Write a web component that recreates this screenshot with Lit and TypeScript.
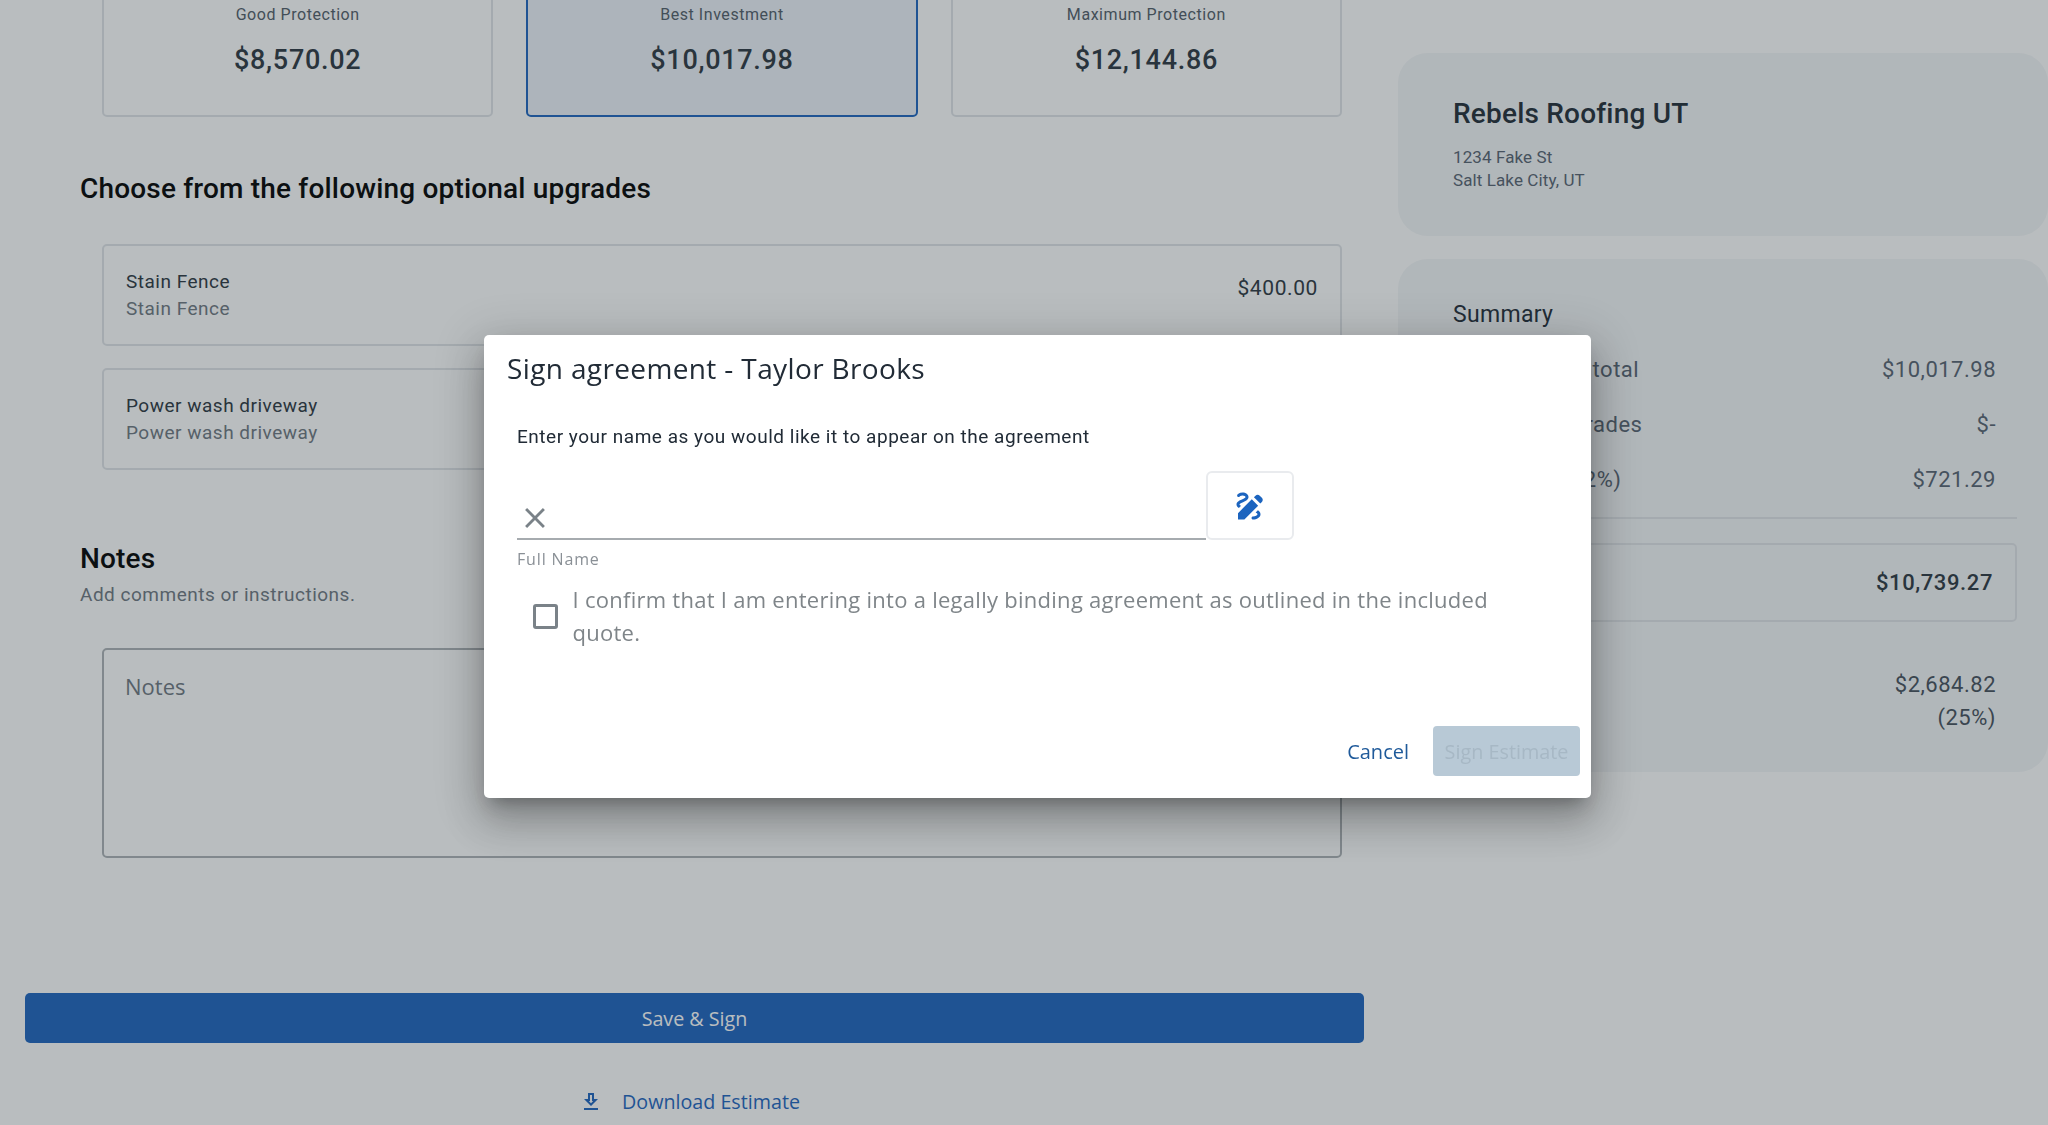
import { LitElement, html, css, svg } from 'lit';
import { customElement } from 'lit/decorators.js';

const plans = [
    { label: 'Good Protection', price: '$8,570.02', selected: false },
    { label: 'Best Investment', price: '$10,017.98', selected: true },
    { label: 'Maximum Protection', price: '$12,144.86', selected: false },
];

const upgrades = [
    { name: 'Stain Fence', price: '$400.00' },
    { name: 'Power wash driveway', price: '$250.00' },
];

const summary = [
    { label: 'Selected Tier total', value: '$10,017.98' },
    { label: 'Optional Upgrades', value: '$-' },
    { label: 'Sales Tax (7.2%)', value: '$721.29' },
];

const icon = (size: number, d: ReturnType<typeof svg>) => html`
    <svg width=${size} height=${size} viewBox="0 0 24 24" fill="currentColor">${d}</svg>
`;

const drawIcon = svg`<path d="M18.85 10.39l1.06-1.06c.78-.78.78-2.05 0-2.83L18.5 5.09c-.78-.78-2.05-.78-2.83 0l-1.06 1.06 4.24 4.24zm-5.66-2.83L4 16.76V21h4.24l9.19-9.19-4.24-4.25zM19 17.5c0 2.19-2.54 3.5-5 3.5-.55 0-1-.45-1-1s.45-1 1-1c1.54 0 3-.73 3-1.5 0-.47-.48-.87-1.23-1.2l1.48-1.48c1.07.63 1.75 1.47 1.75 2.68zM4.58 13.35C3.61 12.79 3 12.06 3 11c0-1.8 1.89-2.63 3.56-3.36C7.59 7.18 9 6.56 9 6c0-.41-.78-1-2-1-1.26 0-1.8.61-1.83.64-.35.41-.98.46-1.4.12-.41-.34-.49-.95-.15-1.38C3.73 4.24 4.76 3 7 3s4 1.32 4 3c0 1.87-1.93 2.72-3.64 3.47C6.42 9.88 5 10.5 5 11c0 .31.43.6 1.07.86l-1.49 1.49z"/>`;
const closeIcon = svg`<path d="M19 6.41L17.59 5 12 10.59 6.41 5 5 6.41 10.59 12 5 17.59 6.41 19 12 13.41 17.59 19 19 17.59 13.41 12z"/>`;
const downloadIcon = svg`<path d="M19 9h-4V3H9v6H5l7 7 7-7zm-8 2V5h2v6h1.17L12 13.17 9.83 11H11zm-6 7h14v2H5z"/>`;

@customElement('app-root')
export class AppRoot extends LitElement {
    static styles = css`
        :host {
            display: block;
            height: 1125px;
            overflow: hidden;
            background: #fff;
            font-family: Roboto, sans-serif;
            color: #212b36;
        }
        .page {
            display: grid;
            grid-template-columns: 1398px 650px;
            margin-top: -40px;
        }
        .main {
            padding-left: 25px;
            width: 1339px;
        }
        .plans {
            display: grid;
            grid-template-columns: repeat(3, 1fr);
            gap: 33px;
            width: 1240px;
            margin-left: 77px;
        }
        .plan {
            box-sizing: border-box;
            height: 157px;
            border: 2px solid #e1e4e8;
            border-radius: 5px;
            text-align: center;
            padding-top: 41px;
        }
        .plan.selected {
            background: #eef2f9;
            border-color: #1c64bf;
        }
        .plan-label {
            font-size: 16px;
            line-height: 24px;
            letter-spacing: 0.55px;
            color: #515c68;
        }
        .plan-price {
            margin-top: 15px;
            font-size: 27px;
            line-height: 36px;
            font-weight: 500;
            letter-spacing: 0.7px;
            color: #2c3640;
        }
        h2 {
            margin: 0;
            color: #000;
            font-size: 28px;
            font-weight: 500;
            line-height: 36px;
            letter-spacing: 0.18px;
        }
        .upgrades-title {
            margin: 54px 0 37px 55px;
        }
        .upgrade {
            box-sizing: border-box;
            height: 102px;
            margin: 0 0 22px 77px;
            width: 1240px;
            border: 2px solid #e1e4e8;
            border-radius: 5px;
            padding: 22px 22px 0;
            display: flex;
            justify-content: space-between;
            font-size: 19px;
            line-height: 27px;
            letter-spacing: 0.5px;
            color: #2c3640;
        }
        .upgrade-sub {
            color: #6e7780;
        }
        .upgrade-price {
            font-size: 21px;
            line-height: 40px;
            letter-spacing: 0.6px;
        }
        .notes-title {
            margin: 71px 0 0 55px;
        }
        .notes-sub {
            margin: 4px 0 0 55px;
            font-size: 19px;
            line-height: 28px;
            letter-spacing: 0.5px;
            color: #6e7780;
        }
        textarea {
            display: block;
            box-sizing: border-box;
            width: 1240px;
            height: 210px;
            margin: 39px 0 0 77px;
            border: 2px solid #adb2b6;
            border-radius: 5px;
            padding: 21px 21px;
            resize: none;
            font-family: 'Open Sans', sans-serif;
            font-size: 22px;
            background: transparent;
        }
        textarea::placeholder {
            color: #6e7780;
        }
        .save {
            display: block;
            width: 100%;
            height: 50px;
            margin-top: 135px;
            border: 0;
            border-radius: 5px;
            background: #1c64bf;
            color: #fff;
            font-family: 'Open Sans', sans-serif;
            font-size: 19.7px;
        }
        .download {
            margin-top: 41px;
            padding-right: 10px;
            display: flex;
            justify-content: center;
            align-items: center;
            gap: 19px;
            color: #1c64bf;
            font-family: 'Open Sans', sans-serif;
            font-size: 19.7px;
            line-height: 36px;
        }
        .side {
            padding-top: 93px;
        }
        .panel {
            background: #f4f6f8;
            border-radius: 30px;
            box-sizing: border-box;
            padding-left: 55px;
        }
        .company {
            height: 183px;
            padding-top: 43px;
            margin-bottom: 23px;
        }
        .company-name {
            font-size: 28px;
            font-weight: 500;
            line-height: 36px;
            letter-spacing: 0.2px;
        }
        .company-address {
            margin-top: 14px;
            font-size: 17px;
            line-height: 23px;
            letter-spacing: 0.1px;
            color: #566270;
        }
        .summary {
            height: 513px;
            padding-top: 41px;
            padding-right: 31px;
        }
        .summary-title {
            margin-bottom: 1px;
            font-size: 23px;
            line-height: 30px;
            letter-spacing: 0.3px;
        }
        .row {
            display: flex;
            justify-content: space-between;
            margin-top: 25px;
            padding-right: 21px;
            font-size: 22px;
            line-height: 30px;
            letter-spacing: 0.5px;
            color: #566270;
        }
        hr {
            margin: 22px 0 0 -100px;
            border: 0;
            border-top: 2px solid #e1e4e8;
        }
        .total {
            box-sizing: border-box;
            height: 79px;
            margin: 24px 0 0 -100px;
            padding: 0 22px;
            border: 2px solid #e1e4e8;
            border-radius: 5px;
            display: flex;
            justify-content: space-between;
            align-items: center;
            font-size: 22px;
            font-weight: 500;
            letter-spacing: 0.6px;
            color: #2c3640;
        }
        .deposit {
            margin-top: 46px;
            padding-right: 21px;
            text-align: right;
            font-size: 22px;
            line-height: 33px;
            letter-spacing: 0.5px;
            color: #454f5b;
        }
        .overlay {
            position: fixed;
            inset: 0;
            background: rgba(38, 50, 56, 0.32);
        }
        .dialog {
            position: absolute;
            left: 484px;
            top: 335px;
            box-sizing: border-box;
            width: 1107px;
            height: 463px;
            background: #fff;
            border-radius: 5px;
            box-shadow: 0 11px 15px -7px rgba(0, 0, 0, 0.25),
                0 24px 38px 3px rgba(0, 0, 0, 0.18),
                0 9px 46px 8px rgba(0, 0, 0, 0.16);
            display: flex;
            flex-direction: column;
            font-family: 'Open Sans', sans-serif;
        }
        .dialog-title {
            margin: 13px 0 0 23px;
            font-size: 28px;
            font-weight: 400;
            line-height: 40px;
            letter-spacing: 0.37px;
            color: #212b36;
        }
        .dialog-body {
            padding: 0 33px;
        }
        .prompt {
            margin-top: 35px;
            font-family: Roboto, sans-serif;
            font-size: 19px;
            line-height: 28px;
            letter-spacing: 0.52px;
        }
        .name-row {
            margin-top: 20px;
            display: flex;
            align-items: flex-end;
        }
        .name-field {
            box-sizing: border-box;
            width: 689px;
            height: 66px;
            display: flex;
            align-items: flex-end;
            padding: 0 0 3px 1px;
            border-bottom: 2px solid #a6abaf;
            color: #7a8288;
        }
        .name-field input {
            flex: 1;
            min-width: 0;
            border: 0;
            outline: 0;
            background: transparent;
        }
        .pen {
            box-sizing: border-box;
            width: 88px;
            height: 69px;
            border: 2px solid #e9ebee;
            border-radius: 6px;
            background: #fff;
            color: #1c64bf;
            display: flex;
            align-items: center;
            justify-content: center;
            padding: 0;
        }
        .hint {
            margin-top: 8px;
            font-size: 16px;
            line-height: 22px;
            letter-spacing: 0.85px;
            color: #8a9096;
        }
        .confirm {
            margin-top: 13px;
            display: flex;
            align-items: center;
            gap: 14.5px;
            padding-left: 16px;
            font-size: 22px;
            line-height: 33px;
            letter-spacing: 0.27px;
            color: #7f8589;
        }
        .confirm input {
            appearance: none;
            flex: none;
            box-sizing: border-box;
            width: 25px;
            height: 25px;
            margin: 0;
            border: 3px solid #7a8288;
            border-radius: 3px;
        }
        .actions {
            margin-top: auto;
            padding: 0 11px 22px 0;
            display: flex;
            justify-content: flex-end;
            align-items: center;
            gap: 24px;
        }
        .cancel {
            border: 0;
            padding: 0;
            background: none;
            color: #1f5a9a;
            font-family: 'Open Sans', sans-serif;
            font-size: 20px;
        }
        .sign {
            box-sizing: border-box;
            width: 147px;
            height: 50px;
            border: 0;
            padding: 0;
            border-radius: 4px;
            background: #b8c9d6;
            color: #a7b8c5;
            font-family: 'Open Sans', sans-serif;
            font-size: 19.8px;
        }
    `;

    render() {
        return html`
            <div class="page">
                <div class="main">
                    <div class="plans">
                        ${plans.map((p) => html`
                            <div class="plan ${p.selected ? 'selected' : ''}">
                                <div class="plan-label">${p.label}</div>
                                <div class="plan-price">${p.price}</div>
                            </div>
                        `)}
                    </div>
                    <h2 class="upgrades-title">Choose from the following optional upgrades</h2>
                    ${upgrades.map((u) => html`
                        <div class="upgrade">
                            <div>
                                <div>${u.name}</div>
                                <div class="upgrade-sub">${u.name}</div>
                            </div>
                            <div class="upgrade-price">${u.price}</div>
                        </div>
                    `)}
                    <h2 class="notes-title">Notes</h2>
                    <div class="notes-sub">Add comments or instructions.</div>
                    <textarea placeholder="Notes"></textarea>
                    <button class="save">Save &amp; Sign</button>
                    <div class="download">${icon(24, downloadIcon)}<span>Download Estimate</span></div>
                </div>
                <div class="side">
                    <div class="panel company">
                        <div class="company-name">Rebels Roofing UT</div>
                        <div class="company-address">1234 Fake St<br />Salt Lake City, UT</div>
                    </div>
                    <div class="panel summary">
                        <div class="summary-title">Summary</div>
                        ${summary.map((r) => html`
                            <div class="row"><span>${r.label}</span><span>${r.value}</span></div>
                        `)}
                        <hr />
                        <div class="total"><span>Total</span><span>$10,739.27</span></div>
                        <div class="deposit">$2,684.82<br />(25%)</div>
                    </div>
                </div>
            </div>
            <div class="overlay">
                <div class="dialog">
                    <h3 class="dialog-title">Sign agreement - Taylor Brooks</h3>
                    <div class="dialog-body">
                        <div class="prompt">Enter your name as you would like it to appear on the agreement</div>
                        <div class="name-row">
                            <div class="name-field">${icon(34, closeIcon)}<input /></div>
                            <button class="pen">${icon(36, drawIcon)}</button>
                        </div>
                        <div class="hint">Full Name</div>
                        <label class="confirm">
                            <input type="checkbox" />
                            <span>I confirm that I am entering into a legally binding agreement as outlined in the included quote.</span>
                        </label>
                    </div>
                    <div class="actions">
                        <button class="cancel">Cancel</button>
                        <button class="sign" disabled>Sign Estimate</button>
                    </div>
                </div>
            </div>
        `;
    }
}
